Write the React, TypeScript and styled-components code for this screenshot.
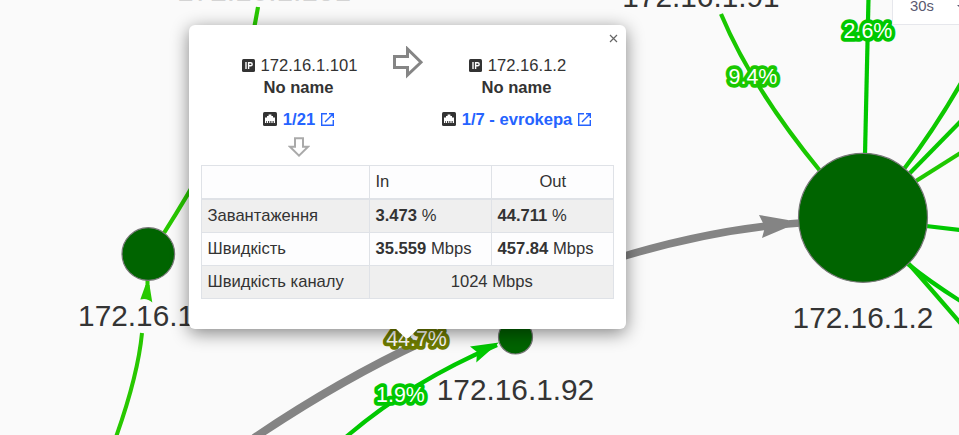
import React from "react";
import styled, { createGlobalStyle } from "styled-components";

const Global = createGlobalStyle`
  * { box-sizing: border-box; }
  body { margin: 0; background: #fafafa; overflow: hidden; font-family: "Liberation Sans", Arial, sans-serif; color: #333; }
`;

const Page = styled.main`
  position: relative;
  width: 959px;
  height: 435px;
  overflow: hidden;
`;

const Topology = styled.svg`
  display: block;
  width: 959px;
  height: 435px;
  font-family: "Liberation Sans", Arial, sans-serif;
`;

const Edge = styled.path<{ $color: string; $width?: number }>`
  fill: none;
  stroke: ${(p) => p.$color};
  stroke-width: ${(p) => p.$width ?? 4.2};
`;

const Device = styled.circle`
  fill: #006400;
  stroke: #777;
  stroke-width: 1.2;
`;

const DeviceLabel = styled.text<{ $faint?: boolean }>`
  font-size: 29.8px;
  fill: ${(p) => (p.$faint ? "#d4d4d4" : "#343434")};
  text-anchor: middle;
`;

const LoadLabel = styled.text<{ $color: string }>`
  font-size: 21.4px;
  fill: #fff;
  stroke: ${(p) => p.$color};
  stroke-width: 7.5px;
  stroke-linejoin: round;
  paint-order: stroke;
  text-anchor: middle;
`;

const IntervalSelect = styled.div`
  position: absolute;
  left: 892px;
  top: -12px;
  width: 90px;
  height: 37px;
  display: flex;
  align-items: center;
  gap: 23px;
  padding-left: 17px;
  background: #fff;
  border: 1px solid #e6e7ec;
  font-size: 14.8px;
  line-height: 17px;
  color: #5a5a70;
`;

const Caret = styled.span`
  border: 4px solid transparent;
  border-top-color: #5a5a70;
  border-bottom: 0;
`;

const Popover = styled.section`
  position: absolute;
  left: 189px;
  top: 25px;
  width: 437px;
  height: 303.5px;
  padding: 30px 12px 0;
  background: #fff;
  border-radius: 6px;
  box-shadow: 0 4px 18px rgba(0, 0, 0, 0.48);
  font-size: 16.6px;
`;

const Pointer = styled.svg`
  position: absolute;
  left: 205px;
  top: 302px;
  width: 26px;
  height: 12px;
`;

const Close = styled.button`
  position: absolute;
  right: 7.5px;
  top: 8px;
  width: 11px;
  height: 11px;
  display: flex;
  align-items: center;
  justify-content: center;
  padding: 0;
  border: 0;
  background: none;
`;

const Endpoints = styled.div`
  display: grid;
  grid-template-columns: 195px 23px 195px;
  height: 110px;
`;

const Endpoint = styled.div`
  display: flex;
  flex-direction: column;
  align-items: center;
`;

const Line = styled.div<{ $gap?: number; $strong?: boolean }>`
  display: flex;
  align-items: center;
  gap: 6px;
  height: 22px;
  margin-top: ${(p) => p.$gap ?? 0}px;
  padding-left: ${(p) => (p.$strong ? 0 : 2)}px;
  font-weight: ${(p) => (p.$strong ? 700 : 400)};
  white-space: nowrap;

  svg { margin-bottom: 2px; }
`;

const PortLink = styled.a`
  display: flex;
  align-items: center;
  gap: 6px;
  color: #2563ff;
  text-decoration: none;
`;

const Direction = styled.div`
  display: flex;
  align-items: flex-start;
  justify-content: center;
  margin-top: -9px;

  svg { flex-shrink: 0; }
`;

const Down = styled.svg`
  margin-top: 6px;
`;

const Stats = styled.table`
  width: 413px;
  table-layout: fixed;
  border-collapse: collapse;
`;

const Row = styled.tr<{ $shade: string; $height?: number }>`
  height: ${(p) => p.$height ?? 33}px;
  background: ${(p) => p.$shade};
`;

const Cell = styled.td<{ $center?: boolean; $heading?: boolean }>`
  padding: 0 5px 0 5.5px;
  border: 1px solid #dfe2e7;
  border-bottom-width: ${(p) => (p.$heading ? 2 : 1)}px;
  text-align: ${(p) => (p.$center ? "center" : "left")};
  line-height: 20px;
  white-space: nowrap;
`;

const IpIcon = () => (
  <svg width="13" height="13" viewBox="0 0 13 13">
    <rect width="13" height="13" rx="1.5" fill="#333" />
    <path d="M4 3v7M6.6 10V3.7h2.1a1.5 1.5 0 0 1 0 3H6.6" fill="none" stroke="#fff" strokeWidth="1.4" />
  </svg>
);

const PortIcon = () => (
  <svg width="14" height="14" viewBox="0 0 14 14">
    <rect width="14" height="14" rx="1.5" fill="#333" />
    <path d="M2 11V5.5h2V4h1.6V2.6h2.8V4H10v1.5h2V11h-1.3V9H9.6v2H8.4V9H7.3v2H6.2V9H5.1v2H3.9V9h-.7v2z" fill="#fff" />
  </svg>
);

const OpenIcon = () => (
  <svg width="13" height="13" viewBox="0 0 13 13" fill="none" stroke="#2563ff" strokeWidth="1.4">
    <path d="M6 .7H.7v11.6h11.6V7M8 .7h4.3V5M12.2.8 4 9" />
  </svg>
);

const green = "#00c800";
const lime = "#19c800";

const edges = [
  { d: "M258 7Q248 66 231 110T164 233", color: "#28c800" },
  { d: "M142 333Q138 375 116 437", color: "#28c800", width: 4 },
  { d: "M147.5 280V297", color: "#28c800", width: 4 },
  { d: "M721 14Q752 88 821 172", color: lime },
  { d: "M868.5 -2L865 155", color: green },
  { d: "M904 169Q934 130 961 83", color: "#0ec800" },
  { d: "M909 174L962 120", color: "#08c800" },
  { d: "M916 181L962 152", color: "#1fc800" },
  { d: "M926 226L961 230", color: green },
  { d: "M908 264Q930 282 962 302", color: green },
  { d: "M908 263Q931 289 962 325", color: "#0ac800" },
  { d: "M346 437Q410 382 497 345", color: green },
];

const Load = ({ x, y, color, children }: { x: number; y: number; color: string; children: string }) => (
  <LoadLabel x={x} y={y} $color={color}>{children}</LoadLabel>
);

export default function App() {
  return (
    <Page>
      <Global />
      <Topology viewBox="0 0 959 435">
        <Edge d="M254 438Q340 380 422 342" $color="#848484" $width={8} />
        <Edge d="M610 260.500Q710 229 800 223" $color="#848484" $width={7.5} />
        <path d="M759 215L788 220L788 227L762 238L765 227z" fill="#848484" />
        {edges.map((e) => (
          <Edge key={e.d} d={e.d} $color={e.color} $width={e.width} />
        ))}
        <path d="M145.500 285H149.500L152.300 302.500Q147 297.500 140.300 299.500z" fill="#28c800" />
        <path d="M499 342.500L470 346.500L477 352L476.300 362.500z" fill={green} />
        <Device cx="148.300" cy="254" r="26.300" />
        <Device cx="515.500" cy="337" r="17" />
        <Device cx="863" cy="217.800" r="64.500" />
        <DeviceLabel x="264" y="0.500" $faint>172.16.1.101</DeviceLabel>
        <DeviceLabel x="148.500" y="326">172.16.1.1</DeviceLabel>
        <DeviceLabel x="515.500" y="400">172.16.1.92</DeviceLabel>
        <DeviceLabel x="701" y="7">172.16.1.91</DeviceLabel>
        <DeviceLabel x="863" y="328">172.16.1.2</DeviceLabel>
        <Load x={416.5} y={346} color="#6f7d00">44.7%</Load>
        <Load x={400.5} y={402} color={green}>1.9%</Load>
        <Load x={753} y={84} color={lime}>9.4%</Load>
        <Load x={868} y={38} color={green}>2.6%</Load>
      </Topology>
      <IntervalSelect>30s<Caret /></IntervalSelect>
      <Popover>
        <Close aria-label="Close">
          <svg width="9" height="9" viewBox="0 0 9 9"><path d="M1 1l7 7M8 1L1 8" stroke="#666" strokeWidth="1.2" /></svg>
        </Close>
        <Endpoints>
          <Endpoint>
            <Line><IpIcon />172.16.1.101</Line>
            <Line $strong>No name</Line>
            <Line $gap={10} $strong><PortIcon /><PortLink>1/21 <OpenIcon /></PortLink></Line>
            <Down width="22" height="22" viewBox="0 0 22 22">
              <path d="M7 1.200H15V9.800H20L11 18.600L2 9.800H7z" fill="none" stroke="#aaa" strokeWidth="2" />
            </Down>
          </Endpoint>
          <Direction>
            <svg width="32" height="34" viewBox="0 0 32 34">
              <path d="M2.500 10.500H15.500V3L29 16.300L15.500 29V21.500H2.500z" fill="none" stroke="#858585" strokeWidth="3" />
            </svg>
          </Direction>
          <Endpoint>
            <Line><IpIcon />172.16.1.2</Line>
            <Line $strong>No name</Line>
            <Line $gap={10} $strong><PortIcon /><PortLink>1/7 - evrokepa <OpenIcon /></PortLink></Line>
          </Endpoint>
        </Endpoints>
        <Stats>
          <colgroup><col width="168" /><col width="122" /><col width="122" /></colgroup>
          <tbody>
            <Row $shade="#fdfdfe"><Cell $heading /><Cell $heading>In</Cell><Cell $heading $center>Out</Cell></Row>
            <Row $shade="#efefef" $height={34}><Cell>Завантаження</Cell><Cell><b>3.473</b> %</Cell><Cell><b>44.711</b> %</Cell></Row>
            <Row $shade="#fdfdfe"><Cell>Швидкість</Cell><Cell><b>35.559</b> Mbps</Cell><Cell><b>457.84</b> Mbps</Cell></Row>
            <Row $shade="#efefef"><Cell>Швидкість каналу</Cell><Cell colSpan={2} $center>1024 Mbps</Cell></Row>
          </tbody>
        </Stats>
        <Pointer viewBox="0 0 26 12"><path d="M0 0H26L15 10.500Q13 12 11 10.500z" fill="#fff" /></Pointer>
      </Popover>
    </Page>
  );
}
